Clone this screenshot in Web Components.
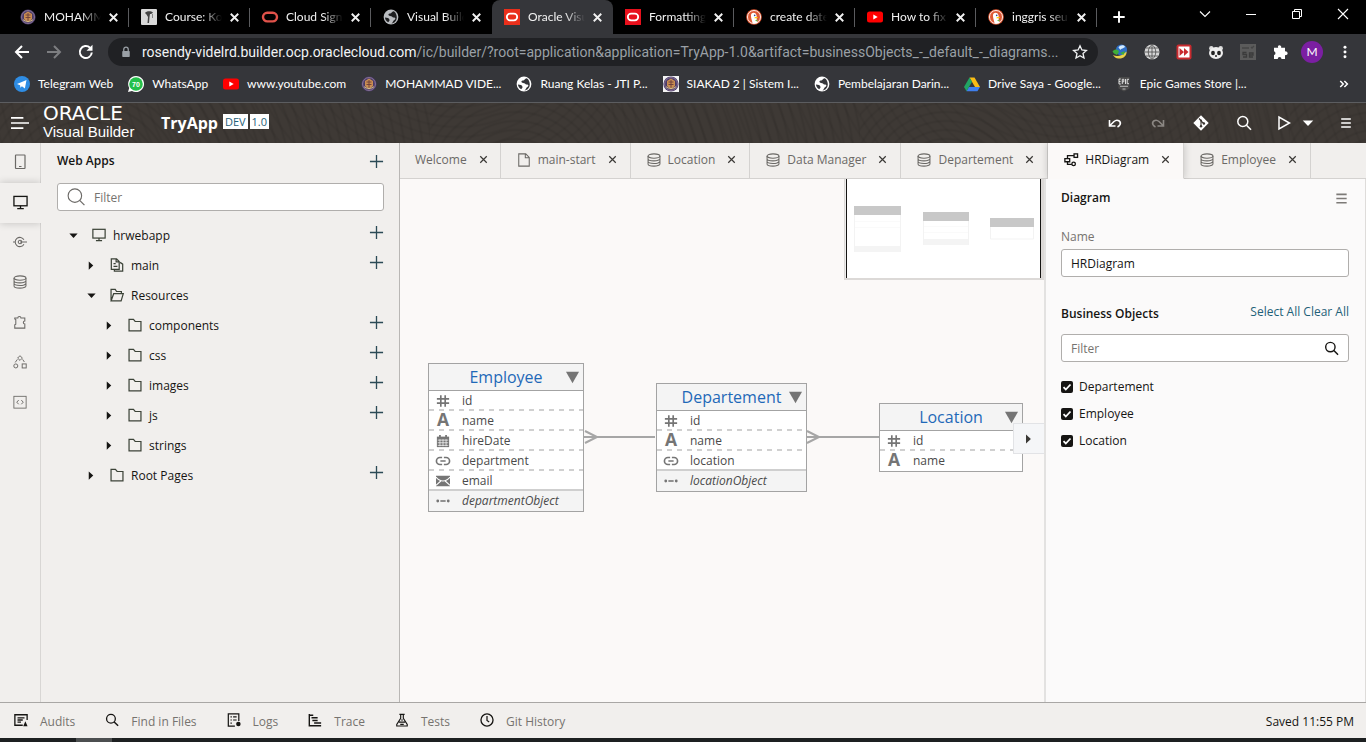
<!DOCTYPE html>
<html lang="en">
<head>
<meta charset="utf-8">
<title>Oracle Visual Builder</title>
<style>
  html, body { margin: 0; height: 100%; }
  body { font: 12px/16px "Open Sans", sans-serif; color: #161513; background: #f1efed; }
</style>
</head>
<body>
<vb-desktop></vb-desktop>
<script>
const define = (name, html, setup) => {
  const tpl = document.createElement('template');
  tpl.innerHTML = html;
  customElements.define(name, class extends HTMLElement {
    connectedCallback() {
      if (this.shadowRoot) return;
      const root = this.attachShadow({ mode: 'open' });
      root.append(tpl.content.cloneNode(true));
      if (setup) setup(this, root);
    }
  });
};

const RESET = `
  *, *::before, *::after { box-sizing: border-box; }
  button { font: inherit; color: inherit; background: none; border: 0; padding: 0; margin: 0; display: inline-flex; align-items: center; justify-content: center; flex: none; }
  a { color: inherit; text-decoration: none; }
  input { font: inherit; color: inherit; margin: 0; }
`;

/* ---------- icons ---------- */
const crest = `<circle cx="8" cy="8" r="7.6" fill="#4a3a66"/><circle cx="8" cy="8" r="6.4" fill="none" stroke="#9a86a8" stroke-width=".8"/><path d="M8 2.6 12 5v5l-4 3.6L4 10V5z" fill="#c98d52"/><path d="M5.5 6h5M5.5 8.5h5M8 4v8" stroke="#6b3d3a" stroke-width=".9"/><path d="M3 10.5c2 2.6 8 2.6 10 0" stroke="#d9c08a" fill="none"/>`;
const globe = (fg, bg) => `<circle cx="8" cy="8" r="7.4" fill="${fg}"/><path d="M10.8 2.2C8.4 2.6 8.9 4.4 6.6 4.6 4.8 4.9 5.3 6.9 7 6.9c2.3 0 2.2 1.8 4.4 1.7 1.5.2 1.2 2.2-.4 2.6-1 .4-1 2.4-2.6 3.2 3.6-.2 5.4-3.3 5.4-6.2 0-2.6-1.2-4.7-3-6z" fill="${bg}"/><path d="M2 8.6c2 .2 4.4.6 4.5 2.3.1 1.200-.9 1.300-1.300 2.300C3 12 2 10.400 2 8.600z" fill="${bg}"/>`;
const duck = `<circle cx="8" cy="8" r="7.8" fill="#de5833"/><circle cx="8" cy="8" r="6.500" fill="none" stroke="#fff" stroke-width=".9"/><path d="M5.600 4.400c1.600-1.200 4.400-.7 4.900 1.900.3 1.500-.1 2.300.2 3.600l.9 3.500c-1.500 1-3.600 1.200-5.100.3C6 11 4 6.400 5.600 4.400z" fill="#fff"/><circle cx="8.700" cy="6.400" r=".8" fill="#2d4f8e"/><path d="M8.600 8.300c1.300-.5 2.600-.5 3.500-.1-.6.8-2.100 1-3.500 1.200z" fill="#fdd20a"/><path d="M9 11.200l2.400-.6v2.200z" fill="#65bc46"/>`;
const oTile = c => `<rect width="16" height="16" fill="${c}"/><rect x="2.800" y="4.700" width="10.400" height="6.600" rx="3.300" fill="none" stroke="#fff" stroke-width="1.800"/>`;
const youtube = `<rect y="2.500" width="16" height="11" rx="2.500" fill="#f00"/><path d="M6.300 5.500 10.700 8l-4.400 2.500z" fill="#fff"/>`;
const S = 'fill="none" stroke="currentColor"';
const ICONS = {
  crest, duck, youtube,
  globe: globe('#b9bcc0', '#1d1e20'), globeWhite: globe('#fff', '#35363a'),
  course: `<rect width="16" height="16" rx="1" fill="#d9d9d9"/><path d="M4 4c1-2 6-2.500 8-.5-1 1.500-2 1.500-3 1.500L8.500 8 8 14H6.500L7 8 5.500 5.500z" fill="#444"/><path d="M11.500 5v4" stroke="#888"/>`,
  oRed: `<rect x="1" y="3.800" width="14" height="8.600" rx="4.300" fill="none" stroke="#e0524a" stroke-width="2.400"/>`,
  oTileA: oTile('#ea2f1b'), oTileB: oTile('#e8101c'),
  close: `<path d="M4 4l8 8M12 4l-8 8" ${S} stroke-width="2"/>`,
  thinClose: `<path d="M4 4l8 8M12 4l-8 8" ${S} stroke-width="1.500"/>`,
  plusBold: `<path d="M8 1.500v13M1.500 8h13" ${S} stroke-width="2.200"/>`,
  plus: `<path d="M8 1v14M1 8h14" ${S} stroke-width="1.400"/>`,
  chev: `<path d="M3 5.500 8 10.500l5-5" ${S} stroke-width="1.100"/>`,
  min: `<path d="M3 8.500h10" ${S}/>`,
  restore: `<path d="M3.500 5.500h7v7h-7zM5.500 5.500v-2h7v7h-2" ${S}/>`,
  winClose: `<path d="M3 3l10 10M13 3 3 13" ${S} stroke-width="1.100"/>`,
  back: `<path d="M15 8H2.500M8 2 2 8l6 6" ${S} stroke-width="2"/>`,
  fwd: `<path d="M1 8h12.500M8 2l6 6-6 6" ${S} stroke-width="2"/>`,
  reload: `<path d="M13.800 8.500A6 6 0 1 1 12 3.700" ${S} stroke-width="2"/><path d="M14.500.8v6h-6z" fill="currentColor"/>`,
  lock: `<rect x="3" y="6.500" width="10" height="8" rx="1" fill="currentColor"/><path d="M5 7V4.500a3 3 0 0 1 6 0V7" ${S} stroke-width="1.700"/>`,
  star: `<path d="M8 1.800l1.900 4.200 4.500.5-3.400 3 1 4.500L8 11.700 4 14l1-4.500-3.400-3 4.500-.5z" ${S} stroke-width="1.300"/>`,
  idm: `<circle cx="9.500" cy="6" r="5.600" fill="#2f6fc6"/><path d="M6.500 3.500c1.500-2.500 5-3 6.500-.8-1.500 2-4 1.300-4.500 3.300z" fill="#d5ecff"/><path d="M.5 7.500C3 4.500 6.500 5 7 8l-2 3-3-1.500z" fill="#3fae3a"/><path d="M1 11c4 2 9 1 13.500-3.500C15 12 11 15 6.500 14.500 4 14.300 2 13 1 11z" fill="#e9d24a"/><path d="M8 9l5-2-1.500 4z" fill="#3fae3a"/>`,
  netGlobe: `<circle cx="8" cy="8" r="7.500" fill="#d6d6d6"/><path d="M8 .5v15M.5 8h15M2 4h12M2 12h12M8 .5c-5 4-5 11 0 15M8 .5c5 4 5 11 0 15" fill="none" stroke="#4a4a4a" stroke-width=".8"/>`,
  skip: `<rect x=".5" y=".5" width="15" height="15" rx="2" fill="#c92a2e"/><rect x="2.500" y="2.500" width="11" height="11" fill="#fff"/><path d="M3.500 4v8l4.500-4zM8 4v8l4.500-4z" fill="#c92a2e"/>`,
  panda: `<circle cx="3.300" cy="4.300" r="2.200" fill="#ddd"/><circle cx="12.700" cy="4.300" r="2.200" fill="#ddd"/><ellipse cx="8" cy="9" rx="7" ry="6" fill="#eee"/><ellipse cx="5" cy="9" rx="1.900" ry="2.300" fill="#222"/><ellipse cx="11" cy="9" rx="1.900" ry="2.300" fill="#222"/><circle cx="8" cy="12" r="1" fill="#222"/>`,
  se: `<rect width="16" height="16" fill="#5b5b5b"/><path d="M2 4h7M11 3l1 1 2-2" stroke="#454545" fill="none" stroke-width="1.300"/><path d="M6.500 8.500H3v2h3.500v2.500H3M9.500 11H13V9H9.500v4H13" stroke="#3b3b3b" fill="none" stroke-width="1.300"/>`,
  puzzleFill: `<path d="M6.500 1.500a1.800 1.800 0 0 1 2.600 2.300H13v3.700a1.900 1.900 0 1 1 0 3.500v4H9.500a1.900 1.900 0 0 0-3.800 0H2v-4a1.900 1.900 0 0 0 0-3.700V3.800h4.200a1.800 1.800 0 0 1 .3-2.300z" fill="currentColor"/>`,
  dots: `<circle cx="8" cy="2.500" r="1.700" fill="currentColor"/><circle cx="8" cy="8" r="1.700" fill="currentColor"/><circle cx="8" cy="13.500" r="1.700" fill="currentColor"/>`,
  telegram: `<circle cx="8" cy="8" r="8" fill="#2f8de4"/><path d="M3 8l9.500-4-1.600 8.500-3-2.200-1.500 1.500-.3-2.600z" fill="#fff"/>`,
  whatsapp: `<path d="M8 0a8 8 0 1 1-4 14.900L0 16l1.200-4A8 8 0 0 1 8 0z" fill="#fff"/><circle cx="8" cy="8" r="6.800" fill="#25c04b"/><text x="8" y="10.500" text-anchor="middle" font-family="Liberation Sans" font-weight="700" font-size="7" fill="#fff">70</text>`,
  siakad: `<rect width="16" height="16" fill="#f4f4f4"/>${crest}`,
  drive: `<path d="M5.500 1.500h5L16 11h-5z" fill="#f9bc15"/><path d="M5.500 1.500 0 11l2.600 4.200L8 5.800z" fill="#21a564"/><path d="M2.600 15.200h10.800L16 11H5z" fill="#3f7fee"/>`,
  epic: `<path d="M2.500 1h11v11.500L8 15.500l-5.500-3z" fill="#4a4a4a"/><path d="M4.800 3H3v5h1.800M3 5.500h1.500M6.300 8V3.300h1.500v2.500H6.300M9.500 3v5M13 3.300h-1.800v4.400H13" stroke="#ddd" fill="none"/><path d="M4 10.300h8M6.500 13h3" stroke="#bbb"/>`,
  more: `<path d="M3 4l4 4-4 4M8.500 4l4 4-4 4" ${S} stroke-width="2"/>`,
  burger: `<path d="M0 3.500h11M0 8h16M0 12.500h11" ${S} stroke-width="1.500"/>`,
  undo: `<path d="M2.500 5v6h6M3 10.500l4-4c3.500-3 7.500 0 6 3.200-.5 1-1.500 1.800-2.500 2.300" ${S} stroke-width="1.600"/>`,
  redo: `<path d="M13.500 5v6h-6M13 10.500l-4-4C5.500 3.500 1.500 6.500 3 9.700c.5 1 1.500 1.800 2.500 2.300" ${S} stroke-width="1.600"/>`,
  git: `<path d="M8 .3 15.700 8 8 15.700.3 8z" fill="currentColor"/><path d="M6 3.500l2 2v6M8 6l2.800 2.500" stroke="#3b3632" fill="none" stroke-width="1.100"/><circle cx="8" cy="11.300" r="1.200" fill="#3b3632"/><circle cx="10.900" cy="8.500" r="1.200" fill="#3b3632"/><circle cx="8" cy="5.500" r="1.100" fill="#3b3632"/>`,
  search: `<circle cx="6.800" cy="6.500" r="5" ${S} stroke-width="1.500"/><path d="M10.500 10.200 15 14.700" ${S} stroke-width="1.600"/>`,
  searchThin: `<circle cx="7" cy="6.800" r="6" ${S}/><path d="M11.300 11 15.500 15.200" ${S} stroke-width="1.100"/>`,
  play: `<path d="M3 2v12l10.500-6z" ${S} stroke-width="1.500"/>`,
  caretDown: `<path d="M2 5h12l-6 6.500z" fill="currentColor"/>`,
  caretRight: `<path d="M4 2v12l6.500-6z" fill="currentColor"/>`,
  menu: `<path d="M2.500 3.500h11M2.500 8h11M2.500 12.500h11" ${S} stroke-width="1.800"/>`,
  phone: `<rect x="3.500" y="1" width="9.500" height="13.500" rx=".5" ${S} stroke-width="1.200"/><path d="M7 12.500h2.500" ${S}/>`,
  monitor: `<rect x="1" y="1.500" width="14" height="10" ${S} stroke-width="1.400"/><path d="M8 11.500v2.500M4.500 14.500h7" ${S} stroke-width="1.400"/>`,
  service: `<path d="M12.500 5.500A5.300 5.300 0 1 0 12.500 10.500M0 8h2.500M8 8h8" ${S} stroke-width="1.200"/><circle cx="8" cy="8" r="2" ${S} stroke-width="1.200"/>`,
  db: `<ellipse cx="8" cy="3.500" rx="6.800" ry="2.500" ${S} stroke-width="1.200"/><path d="M1.200 3.500v9c0 3.300 13.600 3.300 13.600 0v-9M1.200 6.500c0 3.300 13.600 3.300 13.600 0M1.200 9.500c0 3.300 13.600 3.300 13.600 0" ${S} stroke-width="1.200"/>`,
  puzzle: `<path d="M2 3.500h3.500a1.700 1.700 0 1 1 3.600 0h4.400v3.300a1.700 1.700 0 1 0 0 3.400v4.800H2v-3.800l1.200-.8V5.300L2 4.500z" ${S} stroke-width="1.200"/>`,
  flow: `<path d="M8 .8 10.700 3.500 8 6.200 5.300 3.500z" ${S} stroke-width="1.100"/><circle cx="3.200" cy="12.500" r="2.300" ${S} stroke-width="1.100"/><rect x="10.500" y="10.200" width="4.600" height="4.600" ${S} stroke-width="1.100"/><path d="M5 5 2.500 8.500M11 5l2 3" ${S} stroke-width="1.100"/>`,
  code: `<rect x="1" y="1.500" width="14" height="13.500" ${S}/><path d="M6.500 5.800 4.300 8.200l2.200 2.400M9.500 5.800l2.200 2.400-2.200 2.400" ${S} stroke-width="1.100"/>`,
  pages: `<path d="M1.500 1h6l3 3v9h-9zM7 1v3.500h3.500" ${S} stroke-width="1.400"/><path d="M11.500 5 14.500 7v8H5v-2M4 6.500h2.500M4 9.500h4.500" ${S} stroke-width="1.400"/>`,
  folder: `<path d="M1.200 14.800V1.500h5l2 2.500h6.600v10.800z" ${S} stroke-width="1.400"/>`,
  folderOpen: `<path d="M1.200 14V1.500H6l1.500 2.500H13v2.500M1.200 14.800l3-8.300h11l-2.500 8.300z" ${S} stroke-width="1.400"/>`,
  file: `<path d="M2 1h8l4 4v10H2zM9.500 1v4.500H14" ${S} stroke-width="1.200"/>`,
  diagram: `<rect x="11.500" y="1" width="4" height="4" ${S} stroke-width="1.500"/><circle cx="11" cy="12.500" r="2" ${S} stroke-width="1.500"/><path d="M11.500 3H4v3.500M4 10v3h5M1 6.500h5.500v3.500H1z" ${S} stroke-width="1.500"/>`,
  hash: `<path d="M5.500 1.500v13M10.500 1.500v13M1 5.500h14M1 10.500h14" ${S} stroke-width="1.900"/>`,
  attr: `<text x="8" y="14" text-anchor="middle" font-family="Open Sans" font-weight="700" font-size="20" fill="currentColor">A</text>`,
  calendar: `<path d="M1 3h14v12H1z" fill="currentColor"/><path d="M4.500 1v3M11.500 1v3" stroke="currentColor" stroke-width="2"/><path d="M2 7h12M2 10h12M2 13h12M4.500 6v8M8 6v8M11.500 6v8" stroke="#fff" stroke-width=".8"/>`,
  link: `<path d="M7 4H4.500a4 4 0 0 0 0 8H7M9 4h2.500a4 4 0 0 1 0 8H9M5 8h6" ${S} stroke-width="1.900"/>`,
  mail: `<path d="M0 2h16v12H0z" fill="currentColor"/><path d="M0 3.500c5 6 11 6 16 0M0 13l5.500-5M16 13l-5.500-5" stroke="#fff" stroke-width="1.200" fill="none"/>`,
  object: `<circle cx="2" cy="8" r="1.600" fill="currentColor"/><circle cx="14" cy="8" r="1.600" fill="currentColor"/><path d="M5 8h6" stroke="currentColor" stroke-width="1.800"/>`,
  tri: `<path d="M0 1h16L8 15z" fill="currentColor"/>`,
  audits: `<path d="M10 14H1V2h14v6M4 5.500h8M4 8h6M4 10.500h4" ${S} stroke-width="1.500"/><path d="M13 9.500 15.500 15h-5z" fill="currentColor"/>`,
  logs: `<path d="M9 15H1.500V1h12v8M4 4.500h1.500M7 4.500h4M4 8h1.500M7 8h4M4 11.500h1.500" ${S} stroke-width="1.400"/><circle cx="13" cy="12.500" r="2.600" fill="currentColor"/>`,
  trace: `<path d="M1.500 1v13.500H15M1.500 2.500H6M4 5.500h7M5 8.500h6M7 11.500h8" ${S} stroke-width="1.600"/>`,
  flask: `<path d="M5 1.500h6M6.500 1.500V6l-4.500 7v1.800h12V13L9.500 6V1.500M4.500 10.500h7M6 13h4M7 8h2" ${S} stroke-width="1.300"/>`,
  clock: `<circle cx="8" cy="8" r="6.900" ${S} stroke-width="1.500"/><path d="M8 3.500V8.500l2.500 1.700" ${S} stroke-width="1.400"/>`
};
customElements.define('ui-icon', class extends HTMLElement {
  static observedAttributes = ['name', 'size'];
  constructor() { super(); this.attachShadow({ mode: 'open' }); }
  connectedCallback() { this.draw(); }
  attributeChangedCallback() { this.draw(); }
  draw() {
    const size = this.getAttribute('size') || 16;
    this.shadowRoot.innerHTML = `<style>
      :host { display: inline-flex; flex: none; width: ${size}px; height: ${size}px; }
      svg { width: 100%; height: 100%; display: block; overflow: visible; }
    </style><svg viewBox="0 0 16 16" aria-hidden="true">${ICONS[this.getAttribute('name')] || ''}</svg>`;
  }
});

/* ---------- browser chrome ---------- */
define('browser-tab', `<style>${RESET}
  :host { display: flex; align-items: center; box-sizing: border-box; flex: 0 1 121px; height: 34px; padding: 0 7px 0 12px; border-right: 1px solid; border-image: linear-gradient(transparent 24%, #5a5b5e 24% 78%, transparent 78%) 1; color: #f1f1f1; min-width: 0; }
  :host([active]) { background: #35363a; border-radius: 8px 8px 0 0; border-color: transparent; border-image: none; }
  :host([plain]) { border-image: none; border-color: transparent; }
  span { flex: 1; margin-left: 8px; overflow: hidden; white-space: nowrap; mask-image: linear-gradient(90deg, #000 65%, transparent 100%); }
  button { width: 16px; height: 16px; margin-left: 4px; }
</style><ui-icon size="16"></ui-icon><span><slot></slot></span><button aria-label="Close tab"><ui-icon name="close" size="15"></ui-icon></button>`,
(el, root) => root.querySelector('ui-icon').setAttribute('name', el.getAttribute('icon')));

define('browser-tabstrip', `<style>${RESET}
  :host { display: flex; height: 34px; background: #000; padding-left: 8px; font: 12px/16px Lato, sans-serif; color: #fff; }
  .new { width: 44px; }
  .win { margin-left: auto; display: flex; padding: 0 0 6px; }
  .win button { width: 46px; }
</style>
<browser-tab icon="crest">MOHAMMAD</browser-tab>
<browser-tab icon="course">Course: Kom</browser-tab>
<browser-tab icon="oRed">Cloud Sign In</browser-tab>
<browser-tab icon="globe" plain>Visual Builder</browser-tab>
<browser-tab icon="oTileA" active>Oracle Visual</browser-tab>
<browser-tab icon="oTileB">Formatting</browser-tab>
<browser-tab icon="duck">create date</browser-tab>
<browser-tab icon="youtube">How to fix</browser-tab>
<browser-tab icon="duck">inggris seu</browser-tab>
<button class="new" aria-label="New tab"><ui-icon name="plusBold" size="14"></ui-icon></button>
<div class="win">
  <button aria-label="Search tabs"><ui-icon name="chev"></ui-icon></button>
  <button aria-label="Minimize"><ui-icon name="min"></ui-icon></button>
  <button aria-label="Restore"><ui-icon name="restore"></ui-icon></button>
  <button aria-label="Close"><ui-icon name="winClose"></ui-icon></button>
</div>`);

define('browser-toolbar', `<style>${RESET}
  :host { display: flex; align-items: center; height: 36px; background: #35363a; color: #fff; padding: 0 14px; }
  .nav { display: flex; gap: 16px; flex: none; margin-right: 14px; }
  .omni { flex: 1; min-width: 0; height: 28px; border-radius: 14px; background: #202124; display: flex; align-items: center; padding: 0 10px 0 12px; font: 14px/20px Roboto, sans-serif; color: #f1f3f4; }
  .lock { color: #9aa0a6; margin-right: 10px; }
  .url { flex: 1; white-space: nowrap; overflow: hidden; }
  .url i { font-style: normal; color: #9aa0a6; }
  .ext { display: flex; gap: 16px; margin: 0 13px 0 14px; }
  .me { width: 22px; height: 22px; border-radius: 50%; background: #7b1fa2; font: 12px/22px Lato, sans-serif; margin-right: 15px; }
  .off { color: #7d7e81; }
</style>
<div class="nav"><button aria-label="Back"><ui-icon name="back"></ui-icon></button><button class="off" aria-label="Forward"><ui-icon name="fwd"></ui-icon></button><button aria-label="Reload"><ui-icon name="reload"></ui-icon></button></div>
<div class="omni"><ui-icon class="lock" name="lock" size="12"></ui-icon><div class="url">rosendy-videlrd.builder.ocp.oraclecloud.com<i>/ic/builder/?root=application&amp;application=TryApp-1.0&amp;artifact=businessObjects_-_default_-_diagrams...</i></div><button aria-label="Bookmark"><ui-icon name="star"></ui-icon></button></div>
<div class="ext"><ui-icon name="idm"></ui-icon><ui-icon name="netGlobe"></ui-icon><ui-icon name="skip"></ui-icon><ui-icon name="panda"></ui-icon><ui-icon name="se"></ui-icon><ui-icon name="puzzleFill"></ui-icon></div>
<button class="me">M</button><button aria-label="Menu"><ui-icon name="dots" size="14"></ui-icon></button>`);

define('bookmark-link', `<style>${RESET}
  :host { display: flex; flex: none; }
  a { display: flex; align-items: center; gap: 8px; white-space: nowrap; }
</style><a href="#"><ui-icon></ui-icon><span><slot></slot></span></a>`,
(el, root) => root.querySelector('ui-icon').setAttribute('name', el.getAttribute('icon')));

define('bookmark-bar', `<style>${RESET}
  :host { display: flex; align-items: center; gap: 15px; height: 33px; padding: 0 16px 4px 14px; background: #35363a; border-bottom: 1px solid #5c5d60; color: #fff; font: 12px/16px Lato, sans-serif; }
  button { margin-left: auto; }
</style>
<bookmark-link icon="telegram">Telegram Web</bookmark-link>
<bookmark-link icon="whatsapp">WhatsApp</bookmark-link>
<bookmark-link icon="youtube">www.youtube.com</bookmark-link>
<bookmark-link icon="crest">MOHAMMAD VIDE...</bookmark-link>
<bookmark-link icon="globeWhite">Ruang Kelas - JTI P...</bookmark-link>
<bookmark-link icon="siakad">SIAKAD 2 | Sistem I...</bookmark-link>
<bookmark-link icon="globeWhite">Pembelajaran Darin...</bookmark-link>
<bookmark-link icon="drive">Drive Saya - Google...</bookmark-link>
<bookmark-link icon="epic">Epic Games Store |...</bookmark-link>
<button aria-label="More bookmarks"><ui-icon name="more" size="12"></ui-icon></button>`);

/* ---------- application header ---------- */
define('app-header', `<style>${RESET}
  :host { display: flex; align-items: center; height: 40px; padding: 0 13px 0 11px; color: #fff;
    background:
      repeating-radial-gradient(circle at 20% 220%, transparent 0 5px, rgba(0,0,0,.08) 7px, transparent 9px) 0 0 / 430px 100%,
      repeating-radial-gradient(circle at 75% -260%, transparent 0 6px, rgba(0,0,0,.06) 8px, transparent 10px) 0 0 / 610px 100%, #3e3935; }
  .burger { margin-right: 14px; }
  .brand { display: flex; flex-direction: column; width: 91px; padding-bottom: 2px; }
  .brand b { font: 20px/19px "DejaVu Sans", sans-serif; }
  .brand span { font: 15px/17px "Liberation Sans", sans-serif; white-space: nowrap; }
  h1 { margin: 0 5px 0 27px; font: 700 16px/22px "Open Sans", sans-serif; }
  .tag { background: #fff; color: #1f6178; font: 11px/15px "Open Sans", sans-serif; padding: 0 2px; margin: 0 2px 4px 0; }
  nav { margin-left: auto; display: flex; align-items: center; gap: 24px; }
  .tools { display: flex; gap: 27px; }
  .run { display: flex; gap: 9px; }
  .off { color: #8b8783; }
</style>
<button class="burger" aria-label="Navigation"><ui-icon name="burger" size="18"></ui-icon></button>
<div class="brand"><b>ORACLE</b><span>Visual Builder</span></div>
<h1>TryApp</h1><span class="tag">DEV</span><span class="tag">1.0</span>
<nav><div class="tools"><button aria-label="Undo"><ui-icon name="undo"></ui-icon></button><button class="off" aria-label="Redo"><ui-icon name="redo"></ui-icon></button><button aria-label="Git"><ui-icon name="git"></ui-icon></button><button aria-label="Search"><ui-icon name="search"></ui-icon></button></div>
<div class="run"><button aria-label="Preview"><ui-icon name="play"></ui-icon></button><button aria-label="Options"><ui-icon name="caretDown" size="14"></ui-icon></button></div>
<button aria-label="Menu"><ui-icon name="menu" size="14"></ui-icon></button></nav>`);

/* ---------- side rail ---------- */
define('side-rail', `<style>${RESET}
  :host { display: flex; flex-direction: column; width: 41px; flex: none; border-right: 1px solid #d8d6d4; color: #6b6966; background: #f1efed; }
  button { height: 40px; padding-bottom: 2px; }
  button[aria-current] { width: 41px; color: #161513; background: #f1efed; box-shadow: 0 0 8px rgba(0,0,0,.2); clip-path: inset(-8px 0 -8px 0); }
</style>
<button aria-label="Mobile Apps"><ui-icon name="phone"></ui-icon></button>
<button aria-label="Web Apps" aria-current="true"><ui-icon name="monitor" size="15"></ui-icon></button>
<button aria-label="Services"><ui-icon name="service" size="14"></ui-icon></button>
<button aria-label="Business Objects"><ui-icon name="db" size="14"></ui-icon></button>
<button aria-label="Components"><ui-icon name="puzzle" size="14"></ui-icon></button>
<button aria-label="Processes"><ui-icon name="flow" size="14"></ui-icon></button>
<button aria-label="Source"><ui-icon name="code" size="14"></ui-icon></button>`);

/* ---------- web apps tree ---------- */
define('tree-item', `<style>${RESET}
  :host { display: flex; align-items: center; height: 30px; padding-left: calc(9px + var(--depth, 0) * 18px); }
  .caret { width: 14px; margin-right: 12px; }
  .kind { margin-right: 7px; color: #3c4338; }
  .label { padding-top: 2px; }
  .add { margin: 0 0 5px auto; color: #2b4a56; }
</style><button class="caret" aria-label="Toggle"><ui-icon size="11"></ui-icon></button><ui-icon class="kind" size="14"></ui-icon><span class="label"><slot></slot></span>`,
(el, root) => {
  el.style.setProperty('--depth', el.getAttribute('depth'));
  el.setAttribute('role', 'treeitem');
  root.querySelector('.caret ui-icon').setAttribute('name', el.hasAttribute('open') ? 'caretDown' : 'caretRight');
  root.querySelector('.kind').setAttribute('name', el.getAttribute('icon'));
  if (el.hasAttribute('addable')) root.querySelector('.label').insertAdjacentHTML('afterend', '<button class="add" aria-label="Add"><ui-icon name="plus" size="15"></ui-icon></button>');
});

define('web-apps-panel', `<style>${RESET}
  :host { display: block; width: 359px; flex: none; border-right: 1px solid #b9b7b5; background: #f1efed; padding: 9px 15px 0 16px; }
  header { display: flex; align-items: center; justify-content: space-between; height: 18px; color: #2b4a56; }
  h2 { margin: 0; font: 600 12px/18px "Open Sans", sans-serif; color: #161513; }
  label { display: flex; align-items: center; gap: 9px; height: 28px; margin: 13px 0 9px; padding: 0 9px; background: #fff; border: 1px solid #b0aeac; border-radius: 3px; color: #6b6966; }
  input { flex: 1; min-width: 0; border: 0; outline: 0; background: none; padding: 1px 0 0; }
  input::placeholder { color: #76736f; opacity: 1; }
</style>
<header><h2>Web Apps</h2><button aria-label="New web app"><ui-icon name="plus" size="15"></ui-icon></button></header>
<label><ui-icon name="searchThin" size="18"></ui-icon><input type="text" aria-label="Filter web apps" placeholder="Filter"></label>
<div role="tree">
<tree-item depth="0" icon="monitor" open addable>hrwebapp</tree-item>
<tree-item depth="1" icon="pages" addable>main</tree-item>
<tree-item depth="1" icon="folderOpen" open>Resources</tree-item>
<tree-item depth="2" icon="folder" addable>components</tree-item>
<tree-item depth="2" icon="folder" addable>css</tree-item>
<tree-item depth="2" icon="folder" addable>images</tree-item>
<tree-item depth="2" icon="folder" addable>js</tree-item>
<tree-item depth="2" icon="folder">strings</tree-item>
<tree-item depth="1" icon="folder" addable>Root Pages</tree-item>
</div>`);

/* ---------- editor ---------- */
define('editor-tab', `<style>${RESET}
  :host { display: flex; align-items: center; box-sizing: border-box; height: 36px; padding: 0 11px 2px 16px; border-right: 1px solid #d4d2d0; border-bottom: 1px solid #d4d2d0; color: #6b6966; flex: none; white-space: nowrap; }
  :host(:first-of-type) { padding-left: 15px; padding-right: 10px; }
  :host([active]) { color: #161513; background: #fbf9f8; border-bottom-color: #fbf9f8; box-shadow: 0 0 8px rgba(0,0,0,.2); clip-path: inset(0 -8px 0 -8px); }
  .kind { margin-right: 7px; }
  button { margin-left: 10px; color: #3a3835; }
</style><slot></slot><button aria-label="Close"><ui-icon name="thinClose" size="13"></ui-icon></button>`,
(el, root) => {
  if (el.hasAttribute('icon')) root.querySelector('slot').insertAdjacentHTML('beforebegin', `<ui-icon class="kind" size="14" name="${el.getAttribute('icon')}"></ui-icon>`);
});

define('entity-node', `<style>${RESET}
  :host { position: absolute; box-sizing: border-box; border: 1px solid #a3a3a3; background: #fff; color: #4a4a4a; }
  header { position: relative; height: 27px; background: #f4f4f4; border-bottom: 1px solid #a3a3a3; text-align: center; font: 16px/26px "Open Sans", sans-serif; color: #1f69b8; }
  header button { position: absolute; right: 4px; top: 7px; color: #85878a; }
  ul { list-style: none; margin: 0; padding: 0; }
  li { display: flex; align-items: center; gap: 12px; height: 20px; padding-left: 7px; position: relative; }
  li + li::before { content: ""; position: absolute; left: 0; right: 0; top: -2px; height: 2px; background: repeating-linear-gradient(90deg, #d0d0d0 0 5px, transparent 5px 10px); }
  li.ref { font-style: italic; background: #f4f4f4; }
  li.ref::before { background: #cfcfcf; }
  ui-icon { color: #757575; }
</style><header><span></span><button aria-label="Collapse"><ui-icon name="tri" size="13"></ui-icon></button></header><ul></ul>`,
(el, root) => {
  root.querySelector('span').textContent = el.getAttribute('name');
  root.querySelector('ul').innerHTML = el.getAttribute('fields').split(',').map(f => {
    const [icon, text] = f.split(':');
    return `<li${icon === 'object' ? ' class="ref"' : ''}><ui-icon size="14" name="${icon}"></ui-icon>${text}</li>`;
  }).join('');
});

define('diagram-canvas', `<style>${RESET}
  :host { display: block; flex: 1; min-width: 0; position: relative; overflow: hidden; background: #fbf9f8; }
  .wires { position: absolute; left: 0; top: 0; width: 100%; height: 100%; }
  #emp { left: 28px; top: 184px; width: 156px; }
  #dep { left: 256px; top: 204px; width: 151px; }
  #loc { left: 479px; top: 224px; width: 144px; }
  .map { position: absolute; right: 0; top: 0; width: 200px; height: 101px; }
  .fold { position: absolute; right: 0; top: 244px; width: 31px; height: 31px; background: #f5f6f8; border: 1px solid #e2e3e6; border-right: 0; color: #3a3835; }
</style>
<svg class="wires" aria-hidden="true"><path d="M184 258h71M407 258h72M185 252l12 6-12 6M407 252l12 6-12 6" fill="none" stroke="#a6a6a6" stroke-width="2"/></svg>
<entity-node id="emp" name="Employee" fields="hash:id,attr:name,calendar:hireDate,link:department,mail:email,object:departmentObject"></entity-node>
<entity-node id="dep" name="Departement" fields="hash:id,attr:name,link:location,object:locationObject"></entity-node>
<entity-node id="loc" name="Location" fields="hash:id,attr:name"></entity-node>
<svg class="map" viewBox="0 0 200 101" aria-hidden="true">
  <path d="M0 0h200v101H0z" fill="#dcd9d7"/><path d="M1 0h1v99H1z" fill="#eee"/><path d="M2 0h195v99H2z" fill="#fff"/>
  <path d="M2 0h1v99H2zM196 0h1v99h-1z" fill="#161513"/>
  <g fill="#c8c8c8"><path d="M10 27h47v9H10zM79 33h46v9H79zM146 39h44v9h-44z"/></g>
  <g fill="#f4f4f4"><path d="M10 67h47v6H10zM79 60h46v6H79z"/></g>
  <g fill="#fafafa"><path d="M10 42h47v1H10zM10 48h47v1H10zM79 47h46v1H79zM79 53h46v1H79z"/></g>
  <g fill="none" stroke="#f3f3f3"><path d="M10.500 36v37M56.500 36v37M79.500 42v24M124.500 42v24M146.500 48v12h43v-12"/></g>
</svg>
<button class="fold" aria-label="Hide properties"><ui-icon name="caretRight" size="12"></ui-icon></button>`);

define('check-row', `<style>${RESET}
  :host { display: block; height: 27px; }
  label { display: flex; align-items: center; gap: 6px; height: 27px; }
  input { appearance: none; width: 12px; height: 12px; border-radius: 2px; background: #161513 center/10px no-repeat url("data:image/svg+xml,%3Csvg xmlns='http://www.w3.org/2000/svg' viewBox='0 0 10 10'%3E%3Cpath d='M1.500 5.200l2.300 2.300L8.500 2.500' fill='none' stroke='%23fff' stroke-width='1.800'/%3E%3C/svg%3E"); }
</style><label><input type="checkbox" checked><span></span></label>`,
(el, root) => root.querySelector('span').textContent = el.getAttribute('label'));

define('property-panel', `<style>${RESET}
  :host { display: block; width: 322px; flex: none; padding: 10px 16px 0 15px; background: #fbfafa; border-left: 2px solid #e3e2e1; border-right: 1px solid #dedcda; }
  .row { display: flex; align-items: center; justify-content: space-between; }
  h2, h3 { margin: 0; font: 600 12px/18px "Open Sans", sans-serif; }
  .name { display: block; color: #76736f; margin: 21px 0 3px; line-height: 18px; }
  .field { display: flex; align-items: center; height: 28px; padding: 0 9px; background: #fff; border: 1px solid #b0aeac; border-radius: 3px; }
  input { flex: 1; min-width: 0; border: 0; outline: 0; background: none; padding: 1px 0 0; }
  input::placeholder { color: #76736f; opacity: 1; }
  .objects { margin: 27px 0 11px; }
  .links { color: #1f6178; padding-bottom: 3px; }
  .menu { color: #7d7a77; }
  .list { padding-top: 11px; }
</style>
<div class="row"><h2>Diagram</h2><button class="menu" aria-label="Menu"><ui-icon name="menu" size="15"></ui-icon></button></div>
<label class="name" for="n">Name</label>
<div class="field"><input id="n" type="text" value="HRDiagram"></div>
<div class="row objects"><h3>Business Objects</h3><div class="links"><a href="#">Select All</a> <a href="#">Clear All</a></div></div>
<div class="field"><input type="text" aria-label="Filter business objects" placeholder="Filter"><ui-icon name="search" size="15"></ui-icon></div>
<div class="list"><check-row label="Departement"></check-row><check-row label="Employee"></check-row><check-row label="Location"></check-row></div>`);

define('editor-area', `<style>${RESET}
  :host { display: flex; flex-direction: column; flex: 1; min-width: 0; }
  .tabs { display: flex; }
  .rest { flex: 1; border-bottom: 1px solid #d4d2d0; }
  .body { flex: 1; display: flex; min-height: 0; }
</style>
<div class="tabs"><editor-tab>Welcome</editor-tab><editor-tab icon="file">main-start</editor-tab><editor-tab icon="db">Location</editor-tab><editor-tab icon="db">Data Manager</editor-tab><editor-tab icon="db">Departement</editor-tab><editor-tab icon="diagram" active>HRDiagram</editor-tab><editor-tab icon="db">Employee</editor-tab><div class="rest"></div></div>
<div class="body"><diagram-canvas></diagram-canvas><property-panel></property-panel></div>`);

/* ---------- status bar ---------- */
define('status-item', `<style>${RESET}
  :host { display: flex; }
  button { gap: 12px; white-space: nowrap; color: #76736f; }
  ui-icon { color: #161513; margin-bottom: 3px; }
</style><button><ui-icon size="14"></ui-icon><slot></slot></button>`,
(el, root) => root.querySelector('ui-icon').setAttribute('name', el.getAttribute('icon')));

define('status-bar', `<style>${RESET}
  :host { display: flex; align-items: center; gap: 30px; height: 36px; flex: none; padding: 2px 12px 0 14px; background: #f1efed; border-top: 1px solid #a9a7a5; }
  .saved { margin-left: auto; }
</style>
<status-item icon="audits">Audits</status-item><status-item icon="search">Find in Files</status-item><status-item icon="logs">Logs</status-item><status-item icon="trace">Trace</status-item><status-item icon="flask">Tests</status-item><status-item icon="clock">Git History</status-item>
<span class="saved">Saved 11:55 PM</span>`);

define('vb-desktop', `<style>
  :host { display: flex; flex-direction: column; min-height: 100vh; }
  browser-tabstrip, browser-toolbar, bookmark-bar, app-header, status-bar { flex: none; box-sizing: border-box; }
  main { flex: 1; display: flex; min-height: 0; }
  .taskbar { height: 4px; background: #1d2021; display: flex; }
  .taskbar::before { content: ""; width: 36px; margin-left: 76px; background: #4c4f50; }
  side-rail, web-apps-panel { box-sizing: border-box; }
</style>
<browser-tabstrip></browser-tabstrip><browser-toolbar></browser-toolbar><bookmark-bar></bookmark-bar>
<app-header></app-header>
<main><side-rail></side-rail><web-apps-panel></web-apps-panel><editor-area></editor-area></main>
<status-bar></status-bar><div class="taskbar"></div>`);
</script>
</body>
</html>
